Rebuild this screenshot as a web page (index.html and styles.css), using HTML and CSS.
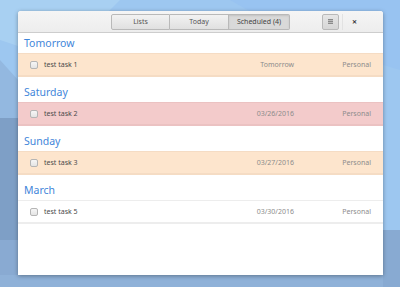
FILE: index.html
```
<!DOCTYPE html>
<html lang="en">
<head>
    <meta charset="UTF-8">
    <title>To Do - Scheduled</title>
    <link rel="stylesheet" href="styles.css">
</head>
<body>
    <svg class="wallpaper" width="400" height="287" viewBox="0 0 400 287">
        <rect width="400" height="287" fill="#9dc7f0"/>
        <polygon points="0,0 120,0 60,60 0,40" fill="#a8d0f2"/>
        <polygon points="230,0 400,0 400,70 300,40" fill="#98c3f1"/>
        <polygon points="0,118 40,118 40,240 0,240" fill="#7e9fc6"/>
        <polygon points="0,240 18,240 18,287 0,287" fill="#89aad2"/>
        <polygon points="0,275 400,275 400,287 0,287" fill="#8fb1d8"/>
        <polygon points="383,230 400,230 400,287 383,287" fill="#88aad2"/>
        <polygon points="0,60 18,80 18,118 0,118" fill="#93b8e0"/>
    </svg>

    <div class="window">
        <div class="headerbar">
            <div class="switcher">
                <div class="tab">Lists</div>
                <div class="tab">Today</div>
                <div class="tab active">Scheduled (4)</div>
            </div>
            <div class="menu-btn"><span></span></div>
            <div class="separator"></div>
            <div class="close">&#x2715;</div>
        </div>

        <div class="content">
            <div class="section">
                <div class="section-title">Tomorrow</div>
                <div class="task soon">
                    <span class="check"></span>
                    <span class="task-title">test task 1</span>
                    <span class="task-date">Tomorrow</span>
                    <span class="task-list">Personal</span>
                </div>
            </div>
            <div class="section">
                <div class="section-title">Saturday</div>
                <div class="task overdue">
                    <span class="check"></span>
                    <span class="task-title">test task 2</span>
                    <span class="task-date">03/26/2016</span>
                    <span class="task-list">Personal</span>
                </div>
            </div>
            <div class="section">
                <div class="section-title">Sunday</div>
                <div class="task soon">
                    <span class="check"></span>
                    <span class="task-title">test task 3</span>
                    <span class="task-date">03/27/2016</span>
                    <span class="task-list">Personal</span>
                </div>
            </div>
            <div class="section">
                <div class="section-title">March</div>
                <div class="task">
                    <span class="check"></span>
                    <span class="task-title">test task 5</span>
                    <span class="task-date">03/30/2016</span>
                    <span class="task-list">Personal</span>
                </div>
            </div>
        </div>
    </div>
</body>
</html>
```

FILE: styles.css
```
* {
    margin: 0;
    padding: 0;
    box-sizing: border-box;
}

body {
    width: 400px;
    height: 287px;
    overflow: hidden;
    position: relative;
    padding: 11px 0 0 18px;
    font-family: "Noto Sans", sans-serif;
    background: #9dc7f0;
}

.wallpaper {
    position: absolute;
    left: 0;
    top: 0;
    z-index: 0;
}

.window {
    position: relative;
    z-index: 1;
    width: 365px;
    height: 264px;
    background: white;
    border-radius: 3px 3px 0 0;
    box-shadow: 0 1px 4px rgba(0, 0, 0, 0.35);
    overflow: hidden;
}

.headerbar {
    height: 22px;
    background: linear-gradient(#f5f5f5, #ededed);
    border-bottom: 1px solid #cdcdcd;
    display: flex;
    align-items: center;
    padding: 0 0 0 93px;
}

.switcher {
    display: flex;
    height: 16px;
}

.tab {
    width: 59px;
    height: 16px;
    border: 1px solid #b9b9b9;
    border-left: none;
    background: linear-gradient(#f2f2f2, #e0e0e0);
    color: #555;
    font-size: 7px;
    display: flex;
    align-items: center;
    justify-content: center;
}

.tab:first-child {
    border-left: 1px solid #b9b9b9;
    border-radius: 2px 0 0 2px;
}

.tab:last-child {
    width: 61px;
    border-radius: 0 2px 2px 0;
}

.tab.active {
    background: #d9d9d9;
    box-shadow: inset 0 1px 2px rgba(0, 0, 0, 0.1);
    color: #444;
}

.menu-btn {
    width: 17px;
    height: 16px;
    margin-left: 32px;
    border: 1px solid #b9b9b9;
    border-radius: 2px;
    background: linear-gradient(#e6e6e6, #d6d6d6);
    display: flex;
    align-items: center;
    justify-content: center;
}

.menu-btn span {
    width: 5px;
    height: 5px;
    background: repeating-linear-gradient(#8a8a8a 0 1px, #bdbdbd 1px 2px);
}

.separator {
    width: 1px;
    height: 16px;
    margin-left: 3px;
    background: #e2e2e2;
}

.close {
    margin-left: 9px;
    font-size: 6px;
    font-weight: bold;
    color: #333;
}

.section + .section {
    margin-top: 5px;
}

.section-title {
    height: 20px;
    padding-left: 6px;
    font-size: 10.5px;
    line-height: 20px;
    color: #3f86da;
}

.task {
    height: 24px;
    display: flex;
    align-items: center;
    padding: 0 12px;
    border-top: 1px solid #ededed;
    border-bottom: 2px solid #ededed;
    font-size: 7px;
    color: #8c8c8c;
}

.task.soon {
    background: #fde5cd;
    border-color: #f5dcc4;
}

.task.overdue {
    background: #f3cbcb;
    border-color: #ebc2c2;
}

.check {
    width: 8px;
    height: 8px;
    border: 1px solid #b5b5b5;
    border-radius: 2px;
    background: linear-gradient(#f6f6f6, #e4e4e4);
}

.task-title {
    flex: 1;
    margin-left: 6px;
    color: #4a4a4a;
}

.task-date {
    width: 80px;
    text-align: right;
}

.task-list {
    width: 77px;
    text-align: right;
}
```
